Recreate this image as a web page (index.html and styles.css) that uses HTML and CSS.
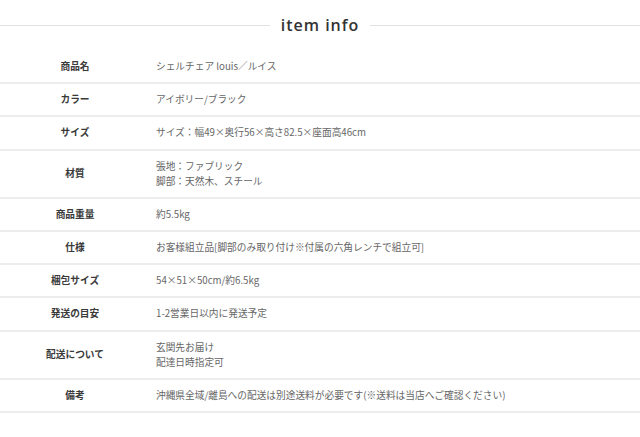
FILE: index.html
```html
<!DOCTYPE html>
<html lang="ja">
<head>
<meta charset="utf-8">
<title>item info</title>
<link rel="stylesheet" href="styles.css">
</head>
<body>
<div class="page">
  <h2 class="title"><span>item info</span></h2>
  <div class="spec">
    <div class="row"><div class="label">商品名</div><div class="value">シェルチェア louis／ルイス</div></div>
    <div class="row"><div class="label">カラー</div><div class="value">アイボリー/ブラック</div></div>
    <div class="row"><div class="label">サイズ</div><div class="value">サイズ：幅49×奥行56×高さ82.5×座面高46cm</div></div>
    <div class="row"><div class="label">材質</div><div class="value">張地：ファブリック<br>脚部：天然木、スチール</div></div>
    <div class="row"><div class="label">商品重量</div><div class="value">約5.5kg</div></div>
    <div class="row"><div class="label">仕様</div><div class="value">お客様組立品[脚部のみ取り付け※付属の六角レンチで組立可]</div></div>
    <div class="row"><div class="label">梱包サイズ</div><div class="value">54×51×50cm/約6.5kg</div></div>
    <div class="row"><div class="label">発送の目安</div><div class="value">1-2営業日以内に発送予定</div></div>
    <div class="row"><div class="label">配送について</div><div class="value">玄関先お届け<br>配達日時指定可</div></div>
    <div class="row"><div class="label">備考</div><div class="value">沖縄県全域/離島への配送は別途送料が必要です(※送料は当店へご確認ください)</div></div>
  </div>
</div>
</body>
</html>
```
FILE: styles.css
```css
html, body {
  margin: 0;
  padding: 0;
  background: #fff;
}
body {
  font-family: "Noto Sans CJK JP", "Noto Sans", sans-serif;
  color: #555;
}
.title {
  display: flex;
  align-items: center;
  gap: 11px;
  height: 51px;
  margin: 0;
  font-family: "Open Sans", "Noto Sans", sans-serif;
  font-size: 16px;
  font-weight: 600;
  letter-spacing: 1px;
  color: #333;
}
.title::before,
.title::after {
  content: "";
  flex: 1;
  height: 1px;
  background: #e2e2e2;
}
.title span {
  line-height: 20px;
  position: relative;
  top: -1px;
}
.spec {
  font-size: 9.7px;
  line-height: 15px;
}
.row {
  display: grid;
  grid-template-columns: 150px 1fr;
  align-items: center;
  border-bottom: 2px solid #ececec;
  padding: 8px 0 8.2px;
}
.label {
  text-align: center;
  font-weight: 700;
  color: #3a3a3a;
}
.value {
  padding-left: 6px;
  color: #666;
}
```
